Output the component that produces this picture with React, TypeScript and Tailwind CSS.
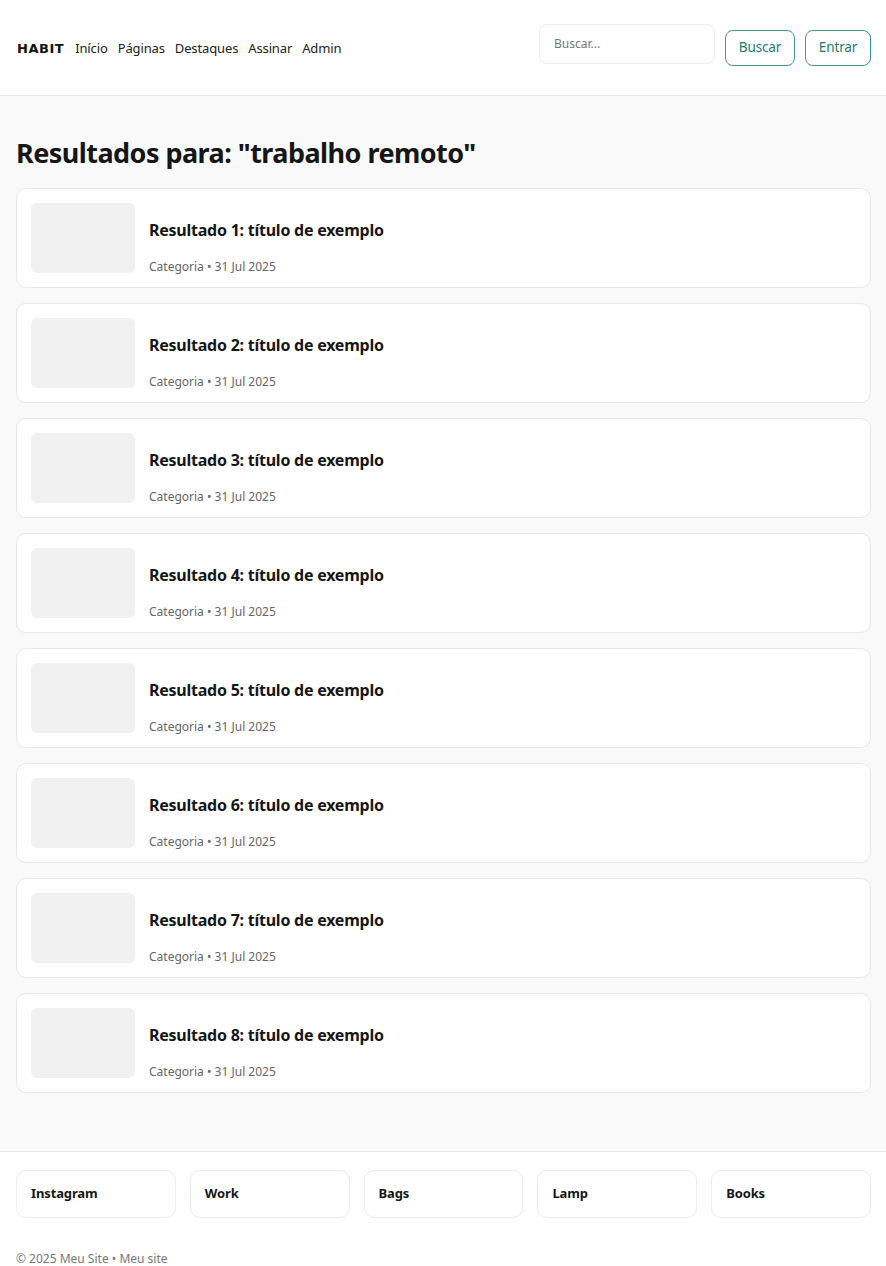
import React from "react";

const results = [1, 2, 3, 4, 5, 6, 7, 8];
const footerLinks = ["Instagram", "Work", "Bags", "Lamp", "Books"];

export default function App() {
  return (
    <div className="min-h-[1266px] bg-[#f9f9f9] text-[#1a1a1a] [font-family:'Noto_Sans',sans-serif]">
      <header className="h-[96px] bg-white border-b border-[#e6e6e6] pl-[16px] pr-[15px] flex items-center justify-between">
        <nav className="flex items-center gap-[10px] text-[13px] tracking-[-0.01em] text-[#222] pt-[2px]">
          <span className="font-extrabold tracking-[0.04em] text-[13px] text-[#111] [font-family:'DejaVu_Sans',sans-serif] pl-[1px] mr-[1px]">HABIT</span>
          <a>Início</a>
          <a>Páginas</a>
          <a>Destaques</a>
          <a>Assinar</a>
          <a>Admin</a>
        </nav>
        <div className="flex items-center gap-[10px]">
          <div className="w-[176px] h-[40px] rounded-[8px] border border-[#ececec] bg-white px-[14px] flex items-center -mt-[8px] text-[12px] text-[#777] box-border">
            Buscar...
          </div>
          <button className="h-[36px] w-[70px] rounded-[8px] border border-[#3f968d] text-[13.5px] tracking-[-0.01em] text-[#1f7a72] bg-white">
            Buscar
          </button>
          <button className="h-[36px] w-[66px] rounded-[8px] border border-[#3f968d] text-[13.5px] tracking-[-0.01em] text-[#1f7a72] bg-white">
            Entrar
          </button>
        </div>
      </header>
      <main className="pl-[16px] pr-[15px] pt-[37px] pb-[58px]">
        <h1 className="text-[27px] tracking-[-0.02em] font-bold leading-[40px] mb-[15px] text-[#161616]">Resultados para: "trabalho remoto"</h1>
        <div className="flex flex-col gap-[15px]">
          {results.map((n) => (
            <div key={n} className="h-[100px] bg-white border border-[#e8e8e8] rounded-[10px] p-[14px] flex gap-[14px] items-start">
              <div className="w-[104px] h-[70px] rounded-[6px] bg-[#f1f1f1] shrink-0" />
              <div className="flex flex-col pt-[16px]">
                <div className="text-[16px] tracking-[-0.015em] font-bold text-[#161616] leading-[22px]">Resultado {n}: título de exemplo</div>
                <div className="text-[12px] text-[#666] mt-[18px] leading-[16px]">Categoria • 31 Jul 2025</div>
              </div>
            </div>
          ))}
        </div>
      </main>
      <footer className="bg-white border-t border-[#e6e6e6] pl-[16px] pr-[15px] pt-[18px] pb-[20px]">
        <div className="grid grid-cols-5 gap-[14px]">
          {footerLinks.map((l) => (
            <div key={l} className="h-[48px] rounded-[10px] border border-[#ececec] bg-white px-[14px] flex items-center text-[13px] tracking-[-0.01em] font-bold text-[#161616]">
              {l}
            </div>
          ))}
        </div>
        <div className="mt-[33px] text-[12px] leading-[16px] text-[#777]">© 2025 Meu Site • Meu site</div>
      </footer>
    </div>
  );
}
